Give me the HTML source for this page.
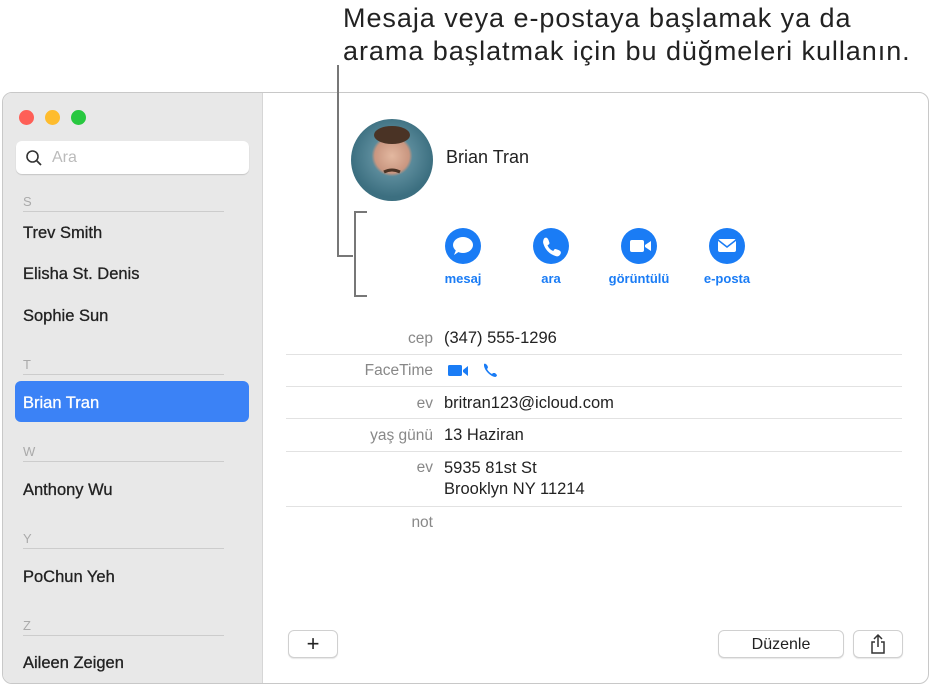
<!DOCTYPE html><html><head><meta charset="utf-8"><style>
*{margin:0;padding:0;box-sizing:border-box}
body{width:931px;height:686px;background:#fff;font-family:"Liberation Sans",sans-serif;position:relative;overflow:hidden;color:#222}
.a{position:absolute}
.win{left:2px;top:92px;width:927px;height:592px;border:1px solid #c8c8c8;border-radius:10px;overflow:hidden;background:#fff}
.side{left:0;top:0;width:260px;height:100%;background:#e8e8e8;border-right:1px solid #d6d6d6}
.dot{width:15px;height:15px;border-radius:50%;top:17px}
.name{left:20px;font-size:16.5px;color:#222;-webkit-text-stroke:0.3px #222}
.hdr{left:20px;font-size:13px;color:#aaa}
.ln{left:20px;width:201px;height:1px;background:#ccc}
.lab{font-size:15.5px;color:#888;text-align:right;width:150px;left:283px}
.val{font-size:16.5px;color:#222;left:444px}
.sep{left:286px;width:616px;height:1px;background:#e2e2e2}
.ic{width:36px;height:36px;border-radius:50%;background:#1a7cf5;top:228px}
.il{font-size:13px;color:#1a7cf5;top:271px;text-align:center;width:90px;font-weight:bold}
.btn{border:1px solid #d0d0d0;border-radius:6px;background:#fff;box-shadow:0 1px 1px rgba(0,0,0,.1);top:630px;height:28px;text-align:center;font-size:16px;line-height:28px}
</style></head><body>
<div class="a" style="left:343px;top:2px;font-size:27px;letter-spacing:0.95px;line-height:33px;color:#222;white-space:nowrap">Mesaja veya e-postaya başlamak ya da<br>arama başlatmak için bu düğmeleri kullanın.</div>
<div class="win a">
<div class="side a"></div>
<div class="a dot" style="left:16px;background:#fe5f57"></div>
<div class="a dot" style="left:42px;background:#febc2e"></div>
<div class="a dot" style="left:68px;background:#28c840"></div>
<div class="a" style="left:13px;top:48px;width:233px;height:33px;background:#fff;border-radius:6px;box-shadow:0 1px 1px rgba(0,0,0,.15)"></div>
<svg class="a" style="left:22px;top:56px" width="18" height="18"><circle cx="7.5" cy="7.5" r="5.5" fill="none" stroke="#333" stroke-width="1.6"/><path d="M11.5 11.5L16 16" stroke="#333" stroke-width="1.8"/></svg>
<div class="a" style="left:49px;top:56px;font-size:16px;color:#bbb">Ara</div>
<div class="a hdr" style="top:101px">S</div><div class="a ln" style="top:118px"></div>
<div class="a name" style="top:131px">Trev Smith</div>
<div class="a name" style="top:172px">Elisha St. Denis</div>
<div class="a name" style="top:214px">Sophie Sun</div>
<div class="a hdr" style="top:264px">T</div><div class="a ln" style="top:281px"></div>
<div class="a" style="left:12px;top:288px;width:234px;height:41px;background:#3b82f6;border-radius:6px"></div>
<div class="a name" style="top:301px;color:#fff;-webkit-text-stroke:0.3px #fff">Brian Tran</div>
<div class="a hdr" style="top:351px">W</div><div class="a ln" style="top:368px"></div>
<div class="a name" style="top:388px">Anthony Wu</div>
<div class="a hdr" style="top:438px">Y</div><div class="a ln" style="top:455px"></div>
<div class="a name" style="top:475px">PoChun Yeh</div>
<div class="a hdr" style="top:525px">Z</div><div class="a ln" style="top:542px"></div>
<div class="a name" style="top:561px">Aileen Zeigen</div>
</div>
<svg class="a" style="left:0;top:0" width="931" height="686"><path d="M338 65V256H353M367 212H355V296H367" fill="none" stroke="#777" stroke-width="2"/>
<defs><radialGradient id="g" cx=".5" cy=".45"><stop offset="0" stop-color="#e3b8a0"/><stop offset=".42" stop-color="#c99680"/><stop offset=".5" stop-color="#5a8a9a"/><stop offset="1" stop-color="#3c6f80"/></radialGradient></defs>
<circle cx="392" cy="160" r="41" fill="url(#g)"/><ellipse cx="392" cy="135" rx="18" ry="9" fill="#4a3325"/><path d="M384 172q8-4 16 0" stroke="#4a3325" stroke-width="3" fill="none"/></svg>
<div class="a" style="left:446px;top:147px;font-size:18px">Brian Tran</div>
<div class="a ic" style="left:445px"></div><div class="a ic" style="left:533px"></div><div class="a ic" style="left:621px"></div><div class="a ic" style="left:709px"></div>
<svg class="a" style="left:445px;top:228px" width="300" height="36" fill="#fff">
<ellipse cx="18" cy="17" rx="10" ry="8"/><path d="M11 22L9 27L15 23Z"/>
<path d="M100 10c2-1 3 0 4 2l1 3c0 1-1 2-2 2 1 3 3 5 6 6 0-1 1-2 2-2l3 1c2 1 3 2 2 4-1 2-3 3-5 2-6-2-10-6-12-12-1-2 0-5 1-6z" transform="translate(-0.5,0)"/>
<rect x="185" y="12" width="14" height="12" rx="2"/><path d="M200 17l6-4v10l-6-4z"/>
<rect x="273" y="11" width="18" height="13" rx="2"/><path d="M273 12l9 7 9-7" fill="none" stroke="#1a7cf5" stroke-width="1.5"/></svg>
<div class="a il" style="left:418px">mesaj</div><div class="a il" style="left:506px">ara</div><div class="a il" style="left:594px">görüntülü</div><div class="a il" style="left:682px">e-posta</div>
<div class="a lab" style="top:330px">cep</div><div class="a val" style="top:329px">(347) 555-1296</div>
<div class="a sep" style="top:354px"></div>
<div class="a lab" style="top:362px">FaceTime</div>
<svg class="a" style="left:446px;top:361px" width="60" height="20" fill="#1a7cf5"><rect x="2" y="4" width="14" height="11" rx="1.5"/><path d="M17 9l5-4v10l-5-4z"/><path d="M38 3c1-1 2 0 3 1l1 2c0 1-1 2-1 2 1 2 3 4 5 5l1-1h2l2 2c0 1-1 2-2 2-5-1-10-6-11-11 0-1 0-1 0-2z"/></svg>
<div class="a sep" style="top:386px"></div>
<div class="a lab" style="top:395px">ev</div><div class="a val" style="top:394px">britran123@icloud.com</div>
<div class="a sep" style="top:418px"></div>
<div class="a lab" style="top:427px">yaş günü</div><div class="a val" style="top:426px">13 Haziran</div>
<div class="a sep" style="top:451px"></div>
<div class="a lab" style="top:459px">ev</div><div class="a val" style="top:458px;line-height:21px">5935 81st St<br>Brooklyn NY 11214</div>
<div class="a sep" style="top:506px"></div>
<div class="a lab" style="top:514px">not</div>
<div class="a btn" style="left:288px;width:50px;font-size:22px;line-height:26px">+</div>
<div class="a btn" style="left:718px;width:126px">Düzenle</div>
<div class="a btn" style="left:853px;width:50px"><svg width="20" height="24" style="margin-top:1px"><path d="M10 3V15M6 7l4-4 4 4M7 10H4v11h12V10h-3" fill="none" stroke="#333" stroke-width="1.5"/></svg></div>
</body></html>
